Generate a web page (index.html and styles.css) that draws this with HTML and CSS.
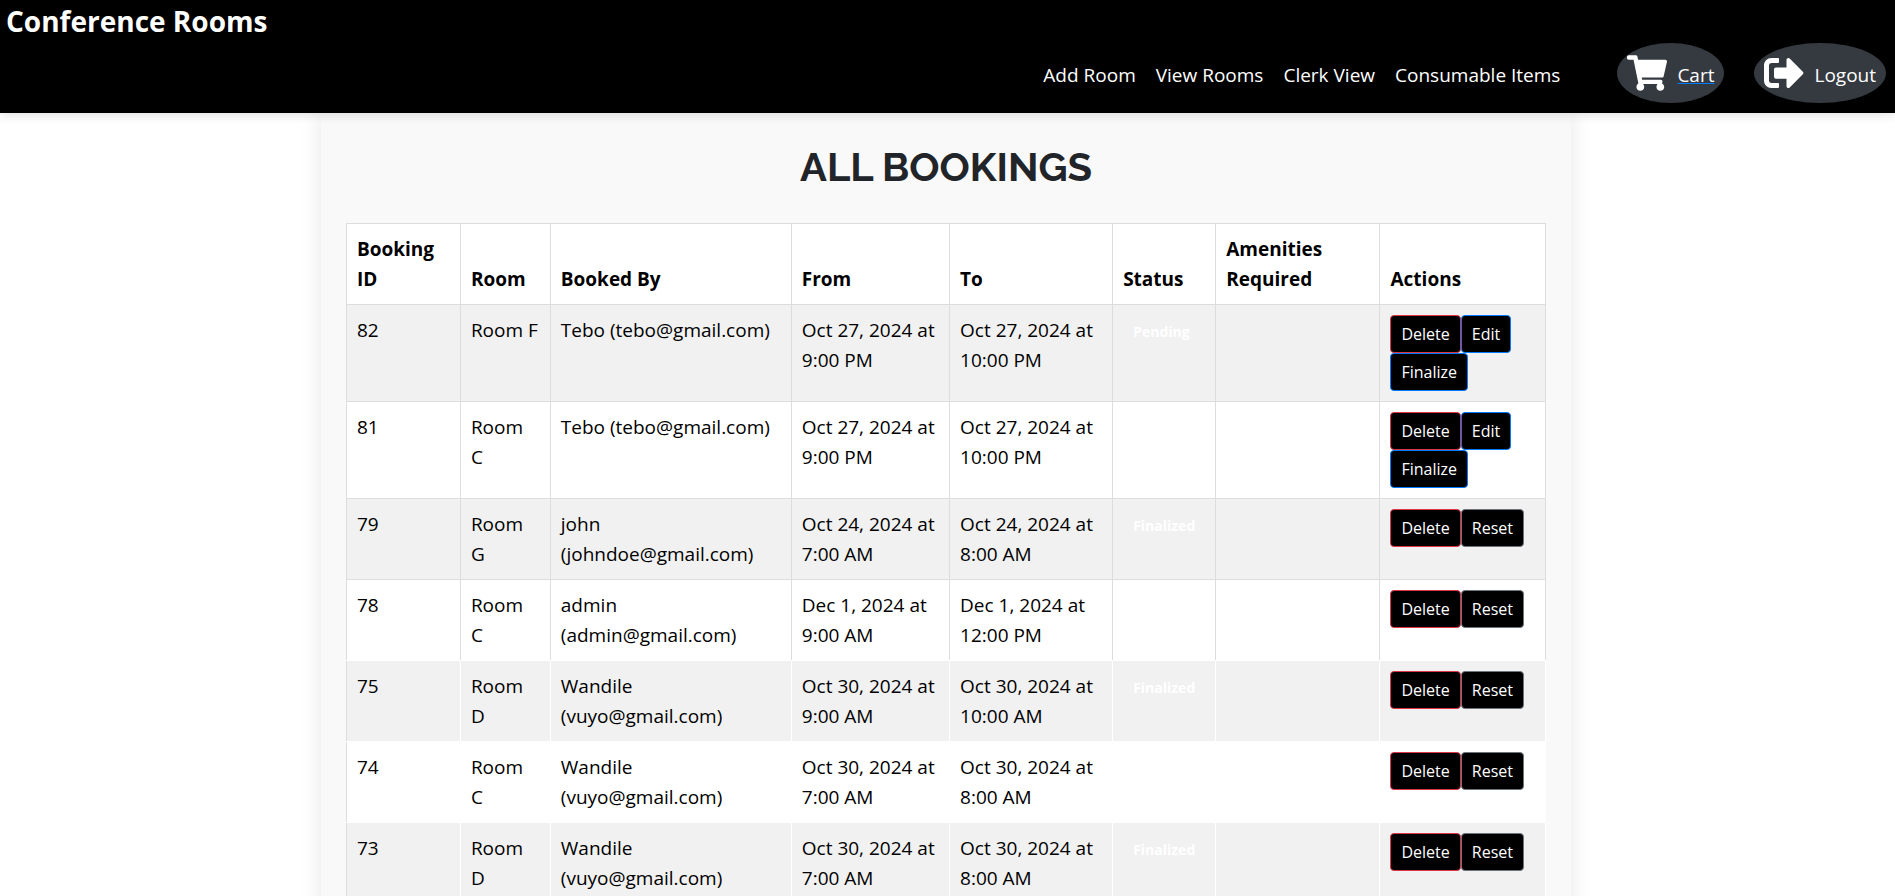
FILE: index.html
```html
<!DOCTYPE html>
<html lang="en">
<head>
<meta charset="utf-8">
<title>Conference Rooms</title>
<link rel="stylesheet" href="styles.css">
</head>
<body>
<header class="site-header">
  <div class="brand">Conference Rooms</div>
  <nav class="site-nav">
    <a class="nav-link" href="#">Add Room</a>
    <a class="nav-link" href="#">View Rooms</a>
    <a class="nav-link" href="#">Clerk View</a>
    <a class="nav-link" href="#">Consumable Items</a>
    <a class="pill pill-cart" href="#">
      <svg class="pill-icon" viewBox="0 0 576 512" aria-hidden="true"><path fill="currentColor" d="M528.12 301.319l47.273-208C578.806 78.301 567.391 64 551.99 64H159.208l-9.166-44.81C147.758 8.021 137.93 0 126.529 0H24C10.745 0 0 10.745 0 24v16c0 13.255 10.745 24 24 24h69.883l70.248 343.435C147.325 417.1 136 435.222 136 456c0 30.928 25.072 56 56 56s56-25.072 56-56c0-15.674-6.447-29.835-16.824-40h209.647C430.447 426.165 424 440.326 424 456c0 30.928 25.072 56 56 56s56-25.072 56-56c0-22.172-12.888-41.332-31.579-50.405l5.517-24.276c3.413-15.018-8.002-29.319-23.403-29.319H218.117l-6.545-32h293.145c11.206 0 20.92-7.754 23.403-18.681z"/></svg>
      <span class="pill-text">Cart</span>
    </a>
    <a class="pill" href="#">
      <svg class="pill-icon" viewBox="0 0 512 512" aria-hidden="true"><path fill="currentColor" d="M497 273L329 441c-15 15-41 4.5-41-17v-96H152c-13.3 0-24-10.7-24-24v-96c0-13.3 10.7-24 24-24h136V88c0-21.4 25.9-32 41-17l168 168c9.3 9.4 9.3 24.6 0 34zM192 436v-40c0-6.6-5.4-12-12-12H96c-17.7 0-32-14.3-32-32V160c0-17.7 14.3-32 32-32h84c6.6 0 12-5.4 12-12V76c0-6.6-5.4-12-12-12H96c-53 0-96 43-96 96v192c0 53 43 96 96 96h84c6.6 0 12-5.4 12-12z"/></svg>
      <span class="pill-text">Logout</span>
    </a>
  </nav>
</header>
<main class="page">
  <section class="panel">
    <h1 class="panel-title">ALL BOOKINGS</h1>
    <table class="bookings">
      <colgroup>
        <col class="col-id"><col class="col-room"><col class="col-by"><col class="col-from"><col class="col-to"><col class="col-status"><col class="col-amenities"><col class="col-actions">
      </colgroup>
      <thead>
        <tr><th>Booking ID</th><th>Room</th><th>Booked By</th><th>From</th><th>To</th><th>Status</th><th>Amenities Required</th><th>Actions</th></tr>
      </thead>
      <tbody>
        <tr>
          <td>82</td><td>Room F</td><td>Tebo (tebo@gmail.com)</td><td>Oct 27, 2024 at 9:00 PM</td><td>Oct 27, 2024 at 10:00 PM</td><td><span class="badge">Pending</span></td><td></td>
          <td><div class="actions"><button class="btn btn-danger">Delete</button><button class="btn btn-primary">Edit</button><button class="btn btn-primary">Finalize</button></div></td>
        </tr>
        <tr>
          <td>81</td><td>Room C</td><td>Tebo (tebo@gmail.com)</td><td>Oct 27, 2024 at 9:00 PM</td><td>Oct 27, 2024 at 10:00 PM</td><td></td><td></td>
          <td><div class="actions"><button class="btn btn-danger">Delete</button><button class="btn btn-primary">Edit</button><button class="btn btn-primary">Finalize</button></div></td>
        </tr>
        <tr>
          <td>79</td><td>Room G</td><td>john (johndoe@gmail.com)</td><td>Oct 24, 2024 at 7:00 AM</td><td>Oct 24, 2024 at 8:00 AM</td><td><span class="badge">Finalized</span></td><td></td>
          <td><div class="actions"><button class="btn btn-danger">Delete</button><button class="btn btn-muted">Reset</button></div></td>
        </tr>
        <tr class="row-last-current">
          <td>78</td><td>Room C</td><td>admin (admin@gmail.com)</td><td>Dec 1, 2024 at 9:00 AM</td><td>Dec 1, 2024 at 12:00 PM</td><td></td><td></td>
          <td><div class="actions"><button class="btn btn-danger">Delete</button><button class="btn btn-muted">Reset</button></div></td>
        </tr>
        <tr class="row-past">
          <td>75</td><td>Room D</td><td>Wandile (vuyo@gmail.com)</td><td>Oct 30, 2024 at 9:00 AM</td><td>Oct 30, 2024 at 10:00 AM</td><td><span class="badge">Finalized</span></td><td></td>
          <td><div class="actions"><button class="btn btn-danger">Delete</button><button class="btn btn-muted">Reset</button></div></td>
        </tr>
        <tr class="row-past">
          <td>74</td><td>Room C</td><td>Wandile (vuyo@gmail.com)</td><td>Oct 30, 2024 at 7:00 AM</td><td>Oct 30, 2024 at 8:00 AM</td><td></td><td></td>
          <td><div class="actions"><button class="btn btn-danger">Delete</button><button class="btn btn-muted">Reset</button></div></td>
        </tr>
        <tr class="row-past">
          <td>73</td><td>Room D</td><td>Wandile (vuyo@gmail.com)</td><td>Oct 30, 2024 at 7:00 AM</td><td>Oct 30, 2024 at 8:00 AM</td><td><span class="badge">Finalized</span></td><td></td>
          <td><div class="actions"><button class="btn btn-danger">Delete</button><button class="btn btn-muted">Reset</button></div></td>
        </tr>
      </tbody>
    </table>
  </section>
</main>
</body>
</html>
```
FILE: styles.css
```css
* { box-sizing: border-box; }

body {
  margin: 0;
  height: 100vh;
  overflow: hidden;
  background: #fff;
  color: #000;
  font: 19px/30px "Segoe UI", "Open Sans", "Noto Sans", sans-serif;
}

.site-header {
  position: relative;
  z-index: 1;
  padding: 2px 9px 10px 6px;
  background: #000;
  color: #fff;
  box-shadow: 0 2px 10px rgba(0, 0, 0, 0.12);
}

.brand {
  padding-bottom: 3px;
  font-size: 28px;
  font-weight: 700;
  line-height: 38px;
}

.site-nav {
  display: flex;
  justify-content: flex-end;
  align-items: center;
  gap: 20px;
}

.nav-link {
  padding-top: 3px;
  color: #fff;
  text-decoration: none;
}

.pill {
  display: flex;
  align-items: center;
  gap: 10px;
  height: 60px;
  padding: 0 10px;
  margin-left: 10px;
  border-radius: 50%;
  background: #343a40;
  color: #fff;
  text-decoration: none;
}

.pill-cart {
  margin-left: 37px;
}

.pill-cart .pill-text {
  text-decoration: underline #007bff;
}

.pill-icon {
  width: 40px;
  height: 40px;
}

.pill-text {
  padding-top: 3px;
}

.page {
  padding: 0 24px 0 21px;
}

.panel {
  max-width: 1250px;
  margin: 0 auto;
  padding: 30px 25px 25px;
  background: #f9f9f9;
  box-shadow: 0 0 20px rgba(0, 0, 0, 0.1);
}

.panel-title {
  margin: 0 0 32px;
  color: #212529;
  font: 700 40px/48px Raleway, Lato, sans-serif;
  text-align: center;
}

.bookings {
  width: 100%;
  table-layout: fixed;
  border-collapse: collapse;
  background: #fff;
}

.col-id { width: 9.5%; }
.col-room { width: 7.5%; }
.col-by { width: 20.1%; }
.col-from { width: 13.2%; }
.col-to { width: 13.6%; }
.col-status { width: 8.6%; }
.col-amenities { width: 13.7%; }
.col-actions { width: 13.8%; }

.bookings th,
.bookings td {
  padding: 10px;
  border: 1px solid #ddd;
  text-align: left;
  vertical-align: top;
}

.bookings th {
  font-weight: 700;
  vertical-align: bottom;
}

.bookings tbody tr:nth-child(odd) {
  background: #f1f1f1;
}

.bookings .row-last-current td {
  border-bottom-color: #fff;
}

.bookings .row-past td {
  border-color: #fff;
}

.bookings .row-past td:first-child {
  border-left-color: #ddd;
}

.badge {
  padding: 0 10px;
  color: #fff;
  font-size: 14px;
  font-weight: 700;
}

.actions {
  display: flex;
  flex-wrap: wrap;
}

.btn {
  height: 38px;
  padding: 0 10px;
  border: 1px solid;
  border-radius: 4px;
  background: #000;
  color: #fff;
  font: 16px/26px "Segoe UI", "Open Sans", "Noto Sans", sans-serif;
}

.btn-danger { border-color: #dc3545; }
.btn-primary { border-color: #007bff; }
.btn-muted { border-color: #6c757d; }
```
